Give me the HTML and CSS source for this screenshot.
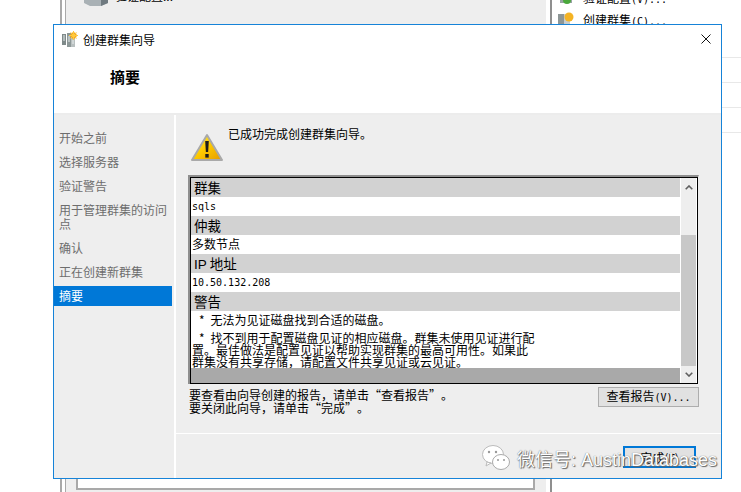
FILE: index.html
```html
<!DOCTYPE html>
<html lang="zh">
<head>
<meta charset="utf-8">
<title>创建群集向导</title>
<link rel="stylesheet" href="styles.css">
</head>
<body>
<div class="backdrop">
  <div class="back-window">
    <div class="back-main">
      <div class="back-top"><svg class="back-server" viewBox="0 0 24 6"><path d="M0 0h24v3l-7 3H6L0 3z" fill="#a9b1b5"/><path d="M17 0h7v3l-7 3z" fill="#6f7a80"/></svg><span>验证配置...</span></div>
      <div class="back-panel"></div>
    </div>
    <div class="back-side">
      <div class="back-action clipped"><svg class="small" viewBox="0 0 16 16"><rect x="2" y="6" width="12" height="8" fill="#9aa3a5"/><circle cx="9" cy="11" r="4" fill="#4aa83c"/></svg><span>验证配置<span class="mono-latin">(V)...</span></span></div>
      <div class="back-action"><svg class="small" viewBox="0 0 16 16"><rect x="0" y="3" width="6" height="12" fill="#8d9696"/><rect x="6" y="3" width="6" height="12" fill="#c8cdcd"/><circle cx="11" cy="6" r="4.500" fill="#f4b324"/></svg><span>创建群集<span class="mono-latin">(C)...</span></span></div>
      <div class="back-rows"><div class="back-row"></div><div class="back-row"></div><div class="back-row"></div><div class="back-row"></div></div>
    </div>
  </div>
</div>
<div class="dialog">
  <header class="head">
    <div class="title-row">
      <svg class="cluster" viewBox="0 0 16 16"><rect x="0" y="3" width="4" height="11" fill="#7f8a8a"/><rect x="5" y="2" width="4" height="14" fill="#8d9898"/><rect x="9" y="7" width="4" height="9" fill="#b9c0c0"/><path d="M1 5h2M1 7h2M1 9h2M6 6h2M6 8h2M6 10h2M10 10h2M10 12h2" stroke="#e8eeee"/><circle cx="11.500" cy="4.500" r="3.200" fill="#f5a81e"/><path d="M11.500 0v9M7 4.500h9M8.500 1.500l6 6M14.500 1.500l-6 6" stroke="#ffc93c"/></svg>
      <span class="title">创建群集向导</span>
      <svg class="close" viewBox="0 0 10 10"><path d="M.5.5l9 9M9.500.5l-9 9" stroke="#111" fill="none"/></svg>
    </div>
    <h1 class="page-title">摘要</h1>
  </header>
  <div class="body">
    <nav class="steps">
      <div class="step">开始之前</div>
      <div class="step">选择服务器</div>
      <div class="step">验证警告</div>
      <div class="step">用于管理群集的访问点</div>
      <div class="step">确认</div>
      <div class="step">正在创建新群集</div>
      <div class="step active">摘要</div>
    </nav>
    <main class="content">
      <div class="upper">
        <div class="status">
          <svg class="warn" viewBox="0 0 32 30">
            <defs><linearGradient id="warnFill" x1="0" y1="0" x2="1" y2="1"><stop offset="0" stop-color="#fff04a"/><stop offset=".5" stop-color="#fdc900"/><stop offset="1" stop-color="#e59a00"/></linearGradient></defs>
            <path d="M16 2L31 27H1z" fill="url(#warnFill)" stroke="#a9a9a9" stroke-width="2" stroke-linejoin="round"/>
            <path d="M14.200 8h3.600l-.7 11h-2.200z" fill="#1c1c1c"/><rect x="14.300" y="21" width="3.400" height="3.600" fill="#1c1c1c"/>
          </svg>
          <span>已成功完成创建群集向导。</span>
        </div>
        <div class="report">
          <div class="report-scroll">
            <div class="report-text">
              <div class="sec">群集</div>
              <div class="val mono">sqls</div>
              <div class="sec">仲裁</div>
              <div class="val">多数节点</div>
              <div class="sec"><span class="latin">IP</span> 地址</div>
              <div class="val mono">10.50.132.208</div>
              <div class="sec">警告</div>
              <div class="warn-text first"><span class="star">*</span>无法为见证磁盘找到合适的磁盘。</div>
              <div class="warn-text second"><span class="star">*</span>找不到用于配置磁盘见证的相应磁盘。群集未使用见证进行配置。最佳做法是配置见证以帮助实现群集的最高可用性。如果此群集没有共享存储，请配置文件共享见证或云见证。</div>
              <div class="tail"></div>
            </div>
            <div class="scrollbar">
              <svg class="arrow up" viewBox="0 0 8 5"><path d="M.7 4.300L4 1l3.300 3.300" fill="none" stroke="#606060" stroke-width="1.600"/></svg>
              <div class="thumb"></div>
              <svg class="arrow down" viewBox="0 0 8 5"><path d="M.7.7L4 4 7.300.7" fill="none" stroke="#606060" stroke-width="1.600"/></svg>
            </div>
          </div>
        </div>
        <div class="hint-row">
          <p class="hint">要查看由向导创建的报告，请单击<span class="quote open">“</span>查看报告<span class="quote">”</span>。<br>要关闭此向导，请单击<span class="quote open">“</span>完成<span class="quote">”</span>。</p>
          <button class="btn report-btn">查看报告<span class="mono-latin">(V)...</span></button>
        </div>
      </div>
      <footer class="foot">
        <button class="btn finish">完成(F)</button>
      </footer>
    </main>
  </div>
</div>
<div class="mark">
  <svg class="wechat" viewBox="0 0 28 26"><ellipse cx="11" cy="9.500" rx="10.500" ry="9" fill="#fff" stroke="#bbb"/><path d="M5 17l-1 4 5-3z" fill="#fff" stroke="#bbb"/><ellipse cx="19" cy="17" rx="8.500" ry="7.500" fill="#fff" stroke="#aaa"/><circle cx="7" cy="7" r="1.200" fill="#999"/><circle cx="14" cy="7" r="1.200" fill="#999"/><circle cx="16" cy="15" r="1" fill="#999"/><circle cx="22" cy="15" r="1" fill="#999"/></svg>
  <span>微信号: AustinDatabases</span>
</div>
</body>
</html>
```
FILE: styles.css
```css
html, body { margin: 0; padding: 0; background: #fff; }
body { width: 741px; height: 492px; position: relative; overflow: hidden; font-family: "Noto Sans CJK SC", "Liberation Sans", sans-serif; color: #000; }
.backdrop { position: absolute; left: 60px; top: 0; width: 681px; height: 492px; }
.back-window { display: flex; height: 100%; border-left: 2px solid #a9a9a9; padding-left: 3px; box-sizing: border-box; }
.back-main { width: 480px; padding-right: 4px; background: #eee; background-clip: content-box; border-left: 1px solid #a9a9a9; border-right: 2px solid #8f8f8f; display: flex; flex-direction: column; justify-content: space-between; }
.back-top { display: flex; gap: 7px; height: 6px; padding-left: 18px; font-size: 12px; line-height: 6px; overflow: hidden; }
.back-top span { margin-top: -7px; }
.back-server { width: 24px; height: 6px; flex: none; }
.back-panel { margin: 0 11px 2px 10px; height: 20px; background: #fff; border: solid #a9a9a9; border-width: 0 2px 2px 2px; }
.back-side { flex: 1; }
.back-action { display: flex; align-items: center; gap: 9px; height: 20px; margin: 2px 0 0 6px; font-size: 12px; }
.back-action.clipped { margin-top: -13px; }
.small { width: 16px; height: 16px; flex: none; }
.mono-latin { font-family: "DejaVu Sans Mono", monospace; font-size: 10px; }
.back-rows { margin-top: 4px; }
.back-row { height: 24px; border-bottom: 1px solid #e8e8e8; }
.dialog { position: absolute; left: 53px; top: 24px; width: 667px; height: 453px; border: 1px solid #1683d8; background: #eee; display: flex; flex-direction: column; }
.head { height: 88px; background: #fff; border-bottom: 2px solid #ececec; }
.title-row { display: flex; align-items: center; height: 28px; padding: 0 10px 0 8px; }
.cluster { width: 16px; height: 16px; }
.title { font-size: 12px; margin-left: 5px; flex: 1; }
.close { width: 10px; height: 10px; }
.page-title { margin: 14px 0 0 56px; font-size: 15px; line-height: 20px; font-weight: 700; }
.body { flex: 1; display: flex; min-height: 0; }
.steps { width: 120px; padding-top: 13px; border-right: 2px solid #fff; font-size: 12px; color: #6d6d6d; }
.step { padding: 3px 5px; margin-bottom: 4px; width: 108px; line-height: 14px; }
.step.active { background: #0078d7; color: #fff; margin: 0; }
.content { flex: 1; display: flex; flex-direction: column; min-width: 0; }
.upper { height: 319px; border-bottom: 1px solid #fff; padding: 0 22px 0 12px; box-sizing: border-box; }
.status { display: flex; height: 60px; font-size: 12px; }
.status span { margin-left: 5px; margin-top: 11px; line-height: 16px; }
.warn { width: 32px; height: 30px; margin-top: 18px; margin-left: 3px; }
.report { height: 209px; width: 511px; box-sizing: border-box; border-top: 2px solid #8e8e8e; border-left: 2px solid #8e8e8e; border-right: 1px solid transparent; }
.report-scroll { display: flex; height: 100%; box-sizing: border-box; border: 1px solid #000; background: #fff; }
.report-text { flex: 1; min-width: 0; overflow: hidden; display: flex; flex-direction: column; }
.sec { height: 19px; line-height: 19px; background: #d2d2d2; font-size: 13.500px; padding-left: 3px; }
.latin { font-family: "Liberation Sans", sans-serif; }
.val { height: 19px; line-height: 18px; font-size: 12px; padding-left: 1px; }
.mono { font-family: "DejaVu Sans Mono", monospace; font-size: 10px; line-height: 20px; }
.warn-text { font-size: 12px; padding-left: 1px; }
.star { margin-left: 7px; margin-right: 6px; }
.first { margin-top: 1px; line-height: 16px; }
.second { margin-top: 4px; width: 344px; line-height: 12px; }
.tail { margin-top: auto; height: 15px; background: #a9a9a9; }
.scrollbar { width: 15px; margin: 0 1px; background: #eee; display: flex; flex-direction: column; align-items: center; }
.arrow { width: 8px; height: 5px; flex: none; }
.arrow.up { margin-top: 7px; }
.arrow.down { margin: 6px 0; }
.thumb { flex: 1; align-self: stretch; background: #c8c8c8; margin-top: 45px; }
.hint-row { display: flex; justify-content: space-between; padding-top: 3px; }
.hint { margin: 1px 0 0 1px; font-size: 12px; line-height: 13px; }
.quote { display: inline-block; width: 12px; text-align: left; }
.quote.open { text-align: right; }
.btn { font: 12px "Noto Sans CJK SC", "Liberation Sans", sans-serif; background: #e1e1e1; border: 1px solid #adadad; color: #000; padding: 0; }
.report-btn { width: 101px; height: 20px; line-height: 16px; }
.foot { flex: 1; display: flex; justify-content: flex-end; align-items: flex-start; padding: 12px 25px 0 0; }
.finish { width: 73px; height: 22px; border: 2px solid #0078d7; }
.mark { position: absolute; left: 482px; top: 445px; display: flex; align-items: center; gap: 7px; font: 18px "Liberation Sans", "Noto Sans CJK SC", sans-serif; color: #fff; text-shadow: 0 0 1px #555, 1px 1px 1px #666; }
.wechat { width: 28px; height: 26px; }
```
